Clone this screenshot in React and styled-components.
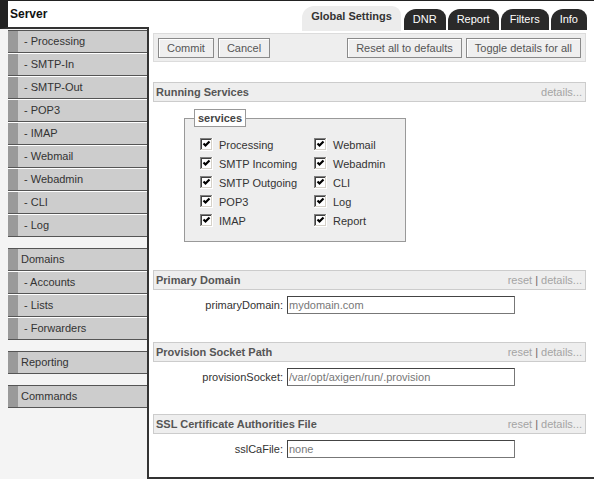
import React from "react";
import styled, { createGlobalStyle } from "styled-components";

const GlobalStyle = createGlobalStyle`
  html, body {
    margin: 0;
    padding: 0;
    background: #fff;
  }
  body {
    font-family: "Liberation Sans", Arial, sans-serif;
    font-size: 11px;
    color: #333;
  }
`;

const Page = styled.div`
  box-sizing: border-box;
  width: 594px;
  height: 479px;
  border-top: 1px solid #222;
  display: grid;
  grid-template-columns: 147px 1fr;
  overflow: hidden;
`;

const Sidebar = styled.nav`
  background: #f4f4f4;
  display: flex;
  flex-direction: column;
`;

const SidebarTitle = styled.div`
  height: 26px;
  line-height: 26px;
  background: #fff;
  border-left: 8px solid #222;
  border-bottom: 2px solid #333;
  padding-left: 2px;
  font-size: 12px;
  font-weight: bold;
  color: #111;
`;

const Group = styled.div`
  margin-left: 8px;
  margin-top: ${p => (p.first ? "1px" : "11px")};
  border-top: 1px solid #555;
`;

const Item = styled.div`
  height: 21px;
  line-height: 21px;
  background: linear-gradient(to right, #9a9a9a 10px, #cdcdcd 10px);
  border-bottom: 1px solid #555;
  padding-left: ${p => (p.sub ? "16px" : "13px")};
  color: #333;
  white-space: nowrap;
  & + & {
    border-top: 1px solid #fff;
  }
`;

const Main = styled.div`
  display: flex;
  flex-direction: column;
`;

const Panel = styled.div`
  box-sizing: border-box;
  margin-top: 26px;
  height: 452px;
  border-left: 2px solid #333;
  border-bottom: 2px solid #333;
  padding: 0 8px 0 4px;
  background: #fff;
`;

const TabBar = styled.div`
  margin-top: -21px;
  margin-right: -1px;
  height: 25px;
  display: flex;
  justify-content: flex-end;
  align-items: flex-end;
  gap: 2px;
`;

const Tab = styled.div`
  box-sizing: border-box;
  height: ${p => (p.active ? "25px" : "21px")};
  padding: 3px 9px 0;
  margin-right: ${p => (p.active ? "1px" : "0")};
  margin-bottom: ${p => (p.active ? "0" : "1px")};
  border-radius: 12px 9px 0 0;
  background: ${p => (p.active ? "#ececec" : "#2a2a2a")};
  color: ${p => (p.active ? "#333" : "#fff")};
  font-weight: ${p => (p.active ? "bold" : "normal")};
  line-height: 14px;
  white-space: nowrap;
`;

const Toolbar = styled.div`
  margin-top: 2px;
  background: #eee;
  border: 1px solid #dcdcdc;
  padding: 4px 4px 3px;
  display: flex;
  justify-content: space-between;
`;

const ButtonGroup = styled.div`
  display: flex;
  gap: 4px;
`;

const Button = styled.button`
  box-sizing: border-box;
  height: 20px;
  padding: 0 8px;
  border: 1px solid #8a8a8a;
  box-shadow: inset 1px 1px 0 #fff;
  background: #efefef;
  color: #555;
  font-family: "Liberation Sans", Arial, sans-serif;
  font-size: 11px;
  line-height: 18px;
`;

const Section = styled.section`
  margin-top: ${p => p.gap}px;
`;

const SectionHeader = styled.div`
  box-sizing: border-box;
  height: 20px;
  background: #eee;
  border: 1px solid #ccc;
  padding: 0 3px 0 2px;
  display: flex;
  align-items: center;
  justify-content: space-between;
`;

const SectionTitle = styled.span`
  font-weight: bold;
  color: #555;
`;

const Links = styled.span`
  color: #a4a4a4;
`;

const Sep = styled.span`
  color: #666;
  margin: 0 3px;
`;

const ServicesBox = styled.fieldset`
  box-sizing: border-box;
  width: 222px;
  margin: 7px 0 0 31px;
  padding: 8px 10px 11px 15px;
  background: #eee;
  border: 1px solid #999;
`;

const Legend = styled.legend`
  margin-left: -6px;
  padding: 0 3px;
  height: 16px;
  line-height: 16px;
  background: #fff;
  border: 1px solid #999;
  font-weight: bold;
  color: #444;
`;

const CheckGrid = styled.div`
  display: grid;
  grid-template-columns: 114px auto;
  grid-template-rows: repeat(5, 19px);
  grid-auto-flow: column;
`;

const CheckRow = styled.label`
  display: flex;
  align-items: center;
  gap: 6px;
  color: #333;
  white-space: nowrap;
`;

const FieldRow = styled.div`
  margin-top: 6px;
  display: flex;
  align-items: center;
  gap: 4px;
`;

const FieldLabel = styled.label`
  width: 130px;
  text-align: right;
  color: #333;
`;

const TextInput = styled.input`
  box-sizing: border-box;
  width: 228px;
  height: 18px;
  padding: 0 1px;
  border: 1px solid #777;
  border-top-color: #444;
  border-left-color: #444;
  background: #fff;
  color: #777;
  font-family: "Liberation Sans", Arial, sans-serif;
  font-size: 11px;
  outline: none;
`;

const CheckBox = () => (
  <svg width="13" height="13" viewBox="0 0 13 13" shapeRendering="crispEdges">
    <rect x="0" y="0" width="13" height="13" fill="#fff" />
    <path d="M0.5 13V0.5H13" stroke="#808080" fill="none" />
    <path d="M1.5 12V1.5H12" stroke="#404040" fill="none" />
    <path d="M0 12.5H12.5V0" stroke="#fff" fill="none" />
    <path d="M1 11.5H11.5V1" stroke="#d4d0c8" fill="none" />
    <polyline points="3.5,5.5 5.5,7.5 9.5,3.5" stroke="#000" strokeWidth="2.2" fill="none" shapeRendering="auto" />
  </svg>
);

const sideGroups = [
  { items: [["- Processing", true], ["- SMTP-In", true], ["- SMTP-Out", true], ["- POP3", true], ["- IMAP", true], ["- Webmail", true], ["- Webadmin", true], ["- CLI", true], ["- Log", true]], first: true },
  { items: [["Domains", false], ["- Accounts", true], ["- Lists", true], ["- Forwarders", true]] },
  { items: [["Reporting", false]] },
  { items: [["Commands", false]] },
];

const services = ["Processing", "SMTP Incoming", "SMTP Outgoing", "POP3", "IMAP", "Webmail", "Webadmin", "CLI", "Log", "Report"];

const fields = [
  { title: "Primary Domain", name: "primaryDomain", value: "mydomain.com", gap: 28 },
  { title: "Provision Socket Path", name: "provisionSocket", value: "/var/opt/axigen/run/.provision", gap: 28 },
  { title: "SSL Certificate Authorities File", name: "sslCaFile", value: "none", gap: 28 },
];

export default function App() {
  return (
    <Page>
      <GlobalStyle />
      <Sidebar>
        <SidebarTitle>Server</SidebarTitle>
        {sideGroups.map((g, i) => (
          <Group key={i} first={g.first}>
            {g.items.map(([label, sub]) => (
              <Item key={label} sub={sub}>{label}</Item>
            ))}
          </Group>
        ))}
      </Sidebar>
      <Main>
        <Panel>
          <TabBar>
            <Tab active>Global Settings</Tab>
            <Tab>DNR</Tab>
            <Tab>Report</Tab>
            <Tab>Filters</Tab>
            <Tab>Info</Tab>
          </TabBar>
          <Toolbar>
            <ButtonGroup>
              <Button>Commit</Button>
              <Button>Cancel</Button>
            </ButtonGroup>
            <ButtonGroup>
              <Button>Reset all to defaults</Button>
              <Button>Toggle details for all</Button>
            </ButtonGroup>
          </Toolbar>

          <Section gap={20}>
            <SectionHeader>
              <SectionTitle>Running Services</SectionTitle>
              <Links>details...</Links>
            </SectionHeader>
            <ServicesBox>
              <Legend>services</Legend>
              <CheckGrid>
                {services.map(s => (
                  <CheckRow key={s}>
                    <CheckBox />
                    {s}
                  </CheckRow>
                ))}
              </CheckGrid>
            </ServicesBox>
          </Section>

          {fields.map(f => (
            <Section key={f.name} gap={f.gap}>
              <SectionHeader>
                <SectionTitle>{f.title}</SectionTitle>
                <Links>reset<Sep>|</Sep>details...</Links>
              </SectionHeader>
              <FieldRow>
                <FieldLabel>{f.name}:</FieldLabel>
                <TextInput defaultValue={f.value} />
              </FieldRow>
            </Section>
          ))}
        </Panel>
      </Main>
    </Page>
  );
}
